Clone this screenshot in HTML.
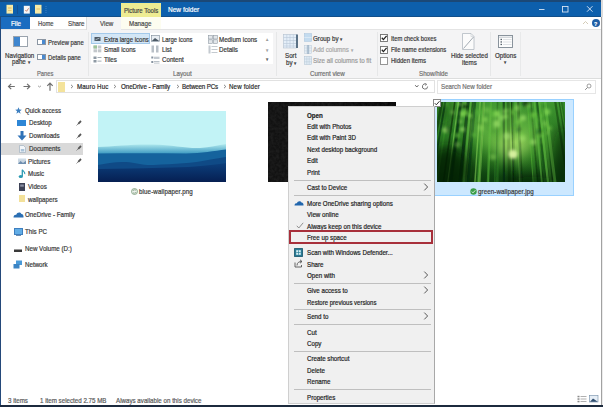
<!DOCTYPE html>
<html><head><meta charset="utf-8">
<style>
*{margin:0;padding:0;box-sizing:border-box}
html,body{width:603px;height:407px;overflow:hidden;background:#fff}
body{position:relative;font-family:"Liberation Sans",sans-serif;color:#222}
.a{position:absolute}
.t{position:absolute;font-size:7px;line-height:8px;white-space:nowrap;color:#383838;-webkit-text-stroke:0.2px currentColor;transform:translateY(0.6px) scaleX(0.885);transform-origin:0 50%}
</style></head><body>

<!-- title bar -->
<div class="a" style="left:0;top:0;width:603px;height:17px;background:#0d5fac"></div>
<div class="a" style="left:0;top:0;width:603px;height:1.5px;background:#1b4877"></div>
<div class="a" style="left:0;top:16px;width:603px;height:1px;background:#124f8a"></div>
<!-- quick access toolbar icons -->
<svg class="a" style="left:5px;top:4px" width="45" height="11">
<rect x="1.5" y="0.8" width="6.5" height="8.8" fill="#f7eaa6"/><line x1="3" y1="4" x2="6.5" y2="4" stroke="#d9a441" stroke-width="0.7"/><line x1="3" y1="6.5" x2="6.5" y2="6.5" stroke="#d9b05a" stroke-width="0.6"/>
<line x1="12.5" y1="1" x2="12.5" y2="10" stroke="#154d8e" stroke-width="0.8"/>
<rect x="18.8" y="1.8" width="6" height="7.8" fill="#f6f6f6"/><polyline points="20.3,6 21.6,7.3 23.6,4.3" fill="none" stroke="#b4553a" stroke-width="0.7"/>
<rect x="30" y="0.8" width="6.5" height="8.8" fill="#f7eaa6"/><line x1="31.5" y1="5" x2="35" y2="5" stroke="#d9a441" stroke-width="0.6"/>
<line x1="41" y1="2" x2="41" y2="9" stroke="#5f97d6" stroke-width="0.6" stroke-dasharray="1 1"/>
</svg>
<!-- Picture tools -->
<div class="a" style="left:121px;top:3px;width:40px;height:14px;background:#eeec92"></div>
<div class="t" style="left:124px;top:5.6px;color:#444;transform:translateY(0.6px) scaleX(0.858)">Picture Tools</div>
<div class="t" style="left:167.5px;top:4.6px;color:#fff;font-size:7.4px">New folder</div>
<!-- window controls -->
<svg class="a" style="left:536px;top:3px" width="60" height="12">
<line x1="3" y1="6.5" x2="8.5" y2="6.5" stroke="#d6e3f3" stroke-width="0.9"/>
<rect x="26.5" y="3.5" width="5.5" height="5.5" fill="none" stroke="#d6e3f3" stroke-width="0.9"/>
<line x1="51" y1="3.2" x2="56.5" y2="8.7" stroke="#dfe9f6" stroke-width="0.9"/><line x1="56.5" y1="3.2" x2="51" y2="8.7" stroke="#dfe9f6" stroke-width="0.9"/>
</svg>



<!-- tab row -->
<div class="a" style="left:0;top:17px;width:603px;height:12px;background:#fff"></div>
<div class="a" style="left:0;top:17px;width:30px;height:12px;background:#1a6cc0"></div>
<div class="t" style="left:11px;top:19px;color:#fff">File</div>
<div class="t" style="left:38px;top:19.2px;color:#4a4a4a;transform:translateY(0.6px) scaleX(0.832)">Home</div>
<div class="t" style="left:67.5px;top:19.2px;color:#4a4a4a">Share</div>

<div class="a" style="left:121px;top:17px;width:40px;height:12px;background:#fdfdf0"></div>
<div class="t" style="left:129px;top:19.2px;color:#4a4a4a">Manage</div>
<div class="a" style="left:591.5px;top:19px;width:8px;height:8px;border-radius:50%;background:#1f5fa6"></div><div class="t" style="left:594px;top:19px;font-size:6px;color:#fff;font-weight:bold">?</div><svg class="a" style="left:582px;top:20px" width="7" height="5"><polyline points="1,4 3.5,1.5 6,4" fill="none" stroke="#cfc6b0" stroke-width="0.9"/></svg>

<!-- ribbon body -->
<div class="a" style="left:0;top:29px;width:603px;height:49.5px;background:#f4f4f5;border-top:1px solid #e4e4e4;border-bottom:1px solid #dcdddd"></div>
<div class="a" style="left:86px;top:17px;width:35px;height:13px;background:#f4f4f5;border-left:1px solid #dcdcdc"></div>
<div class="t" style="left:100px;top:19.2px;color:#4a4a4a">View</div>


<!-- Panes group -->
<div class="a" style="left:13px;top:36px;width:15px;height:11px;border:1px solid #9aa3ad;background:#fff"></div>
<div class="a" style="left:14px;top:37px;width:6px;height:9px;background:#3f86cf"></div>
<div class="t" style="left:5px;top:51.3px">Navigation</div>
<div class="t" style="left:12px;top:57.3px">pane <span style="font-size:5px">&#9662;</span></div>
<div class="a" style="left:37px;top:39px;width:9px;height:6px;border:1px solid #8b96a3;background:#fff"></div>
<div class="a" style="left:42px;top:40px;width:3px;height:4px;background:#4a8ad0"></div>
<div class="t" style="left:48px;top:38px;transform:translateY(0.6px) scaleX(0.841)">Preview pane</div>
<div class="a" style="left:37px;top:54px;width:9px;height:6px;border:1px solid #8b96a3;background:#fff"></div>
<div class="a" style="left:42px;top:55px;width:3px;height:4px;background:#4a8ad0"></div>
<div class="t" style="left:48px;top:53px;transform:translateY(0.6px) scaleX(0.841)">Details pane</div>
<div class="t" style="left:37px;top:68.5px;color:#707070;transform:translateY(0.6px) scaleX(0.823)">Panes</div>
<div class="a" style="left:88px;top:32px;width:1px;height:44px;background:#e6e7e8"></div>

<!-- Layout group -->
<div class="a" style="left:91px;top:33px;width:182px;height:31px;background:#fff"></div>
<div class="a" style="left:91px;top:33px;width:59px;height:10.5px;background:#d3e6f6;border:1px solid #a3c9ea"></div>
<svg class="a" style="left:94px;top:36px" width="7" height="6"><rect x="0.5" y="1" width="6" height="4" fill="#4d5a66"/><line x1="1.5" y1="3.8" x2="5.5" y2="2" stroke="#c9d5de" stroke-width="0.7"/></svg>
<div class="t" style="left:104px;top:34.5px;transform:translateY(0.6px) scaleX(0.858)">Extra large icons</div>
<svg class="a" style="left:93px;top:45px" width="9" height="8"><g fill="#c3c7cb"><rect x="0.5" y="0.5" width="3.5" height="3"/><rect x="4.8" y="0.5" width="3.5" height="3"/><rect x="0.5" y="4.3" width="3.5" height="3"/><rect x="4.8" y="4.3" width="3.5" height="3"/></g><rect x="0.5" y="0.5" width="3.5" height="3" fill="#9dc49a"/></svg>
<div class="t" style="left:104px;top:45px">Small icons</div>
<svg class="a" style="left:93px;top:56px" width="9" height="7"><g fill="#8e99a4"><rect x="0.5" y="0.5" width="3" height="2.5"/><rect x="0.5" y="4" width="3" height="2.5"/><rect x="4.5" y="1.2" width="4" height="0.8"/><rect x="4.5" y="4.7" width="4" height="0.8"/></g></svg>
<div class="t" style="left:104px;top:55px">Tiles</div>
<svg class="a" style="left:151px;top:35px" width="9" height="7"><rect x="0.5" y="0.5" width="8" height="6" fill="#e8edf2" stroke="#7b8794" stroke-width="0.6"/><path d="M0.8 6 L4 3 L8.2 6Z" fill="#4d5a66"/></svg>
<div class="t" style="left:162px;top:34.5px;transform:translateY(0.6px) scaleX(0.845)">Large icons</div>
<svg class="a" style="left:151px;top:45px" width="9" height="8"><g fill="#b9c0c7"><rect x="0.5" y="0.5" width="2.5" height="7"/><rect x="5" y="0.5" width="2.5" height="7"/></g></svg>
<div class="t" style="left:162px;top:45px">List</div>
<svg class="a" style="left:150.5px;top:55.5px" width="9" height="8"><g fill="#8793a0"><rect x="0.3" y="0.5" width="2" height="2"/><rect x="0.3" y="5" width="2" height="2"/></g><g fill="#9aa5b0"><rect x="3" y="0.8" width="5.5" height="0.8"/><rect x="3" y="2.3" width="5.5" height="0.6"/><rect x="3" y="5.3" width="5.5" height="0.8"/><rect x="3" y="6.8" width="5.5" height="0.6"/></g></svg>
<div class="t" style="left:162px;top:55px">Content</div>
<svg class="a" style="left:208px;top:35px" width="10" height="9"><g fill="#e2e6ea" stroke="#8f99a3" stroke-width="0.6"><rect x="0.5" y="0.5" width="4" height="3.5"/><rect x="5.3" y="0.5" width="4" height="3.5"/><rect x="0.5" y="4.8" width="4" height="3.5"/><rect x="5.3" y="4.8" width="4" height="3.5"/></g></svg>
<div class="t" style="left:219px;top:34.5px">Medium icons</div>
<svg class="a" style="left:208px;top:45px" width="10" height="9"><g fill="#c4cad0"><rect x="0.5" y="0.5" width="2" height="8"/><rect x="3.5" y="1" width="6" height="1"/><rect x="3.5" y="4" width="6" height="1"/><rect x="3.5" y="7" width="6" height="1"/></g></svg>
<div class="t" style="left:219px;top:45px">Details</div>
<div class="t" style="left:266px;top:34px;color:#999;font-size:5px">&#9652;</div>
<div class="t" style="left:266px;top:45px;color:#999;font-size:5px">&#9662;</div>
<div class="t" style="left:266px;top:54px;color:#555;font-size:5px">&#9662;</div>
<div class="t" style="left:173px;top:68.5px;color:#707070">Layout</div>
<div class="a" style="left:276px;top:32px;width:1px;height:44px;background:#e6e7e8"></div>

<!-- Current view -->
<svg class="a" style="left:283px;top:34px" width="16" height="15"><rect x="0.5" y="0.5" width="13" height="13.5" fill="#e4eef8" stroke="#b4c2d0" stroke-width="0.6"/><g stroke="#b8c8d8" stroke-width="0.6"><line x1="3.8" y1="0.5" x2="3.8" y2="14"/><line x1="7" y1="0.5" x2="7" y2="14"/><line x1="10.3" y1="0.5" x2="10.3" y2="14"/><line x1="0.5" y1="3.5" x2="13.5" y2="3.5"/><line x1="0.5" y1="6.5" x2="13.5" y2="6.5"/><line x1="0.5" y1="9.5" x2="13.5" y2="9.5"/><line x1="0.5" y1="12" x2="13.5" y2="12"/></g><rect x="13" y="0.5" width="2" height="13.5" fill="#5a7186"/></svg>
<div class="t" style="left:285px;top:51px">Sort</div>
<div class="t" style="left:286px;top:58px">by <span style="font-size:5px">&#9662;</span></div>
<svg class="a" style="left:304px;top:33px" width="8" height="9"><rect x="0.3" y="0.5" width="7.4" height="8" fill="#c3dbef" stroke="#a9c4dc" stroke-width="0.5"/><line x1="0.3" y1="4.5" x2="7.7" y2="4.5" stroke="#e8f1f9" stroke-width="0.6"/></svg>
<div class="t" style="left:313px;top:33.5px">Group by <span style="font-size:5px">&#9662;</span></div>
<svg class="a" style="left:304px;top:45px" width="8" height="9"><rect x="0.3" y="0.5" width="7.4" height="8" fill="#e6eef6" stroke="#b9c8d6" stroke-width="0.5"/><g stroke="#c0cedb" stroke-width="0.5"><line x1="2.8" y1="0.5" x2="2.8" y2="8.5"/><line x1="5.2" y1="0.5" x2="5.2" y2="8.5"/><line x1="0.3" y1="3" x2="7.7" y2="3"/><line x1="0.3" y1="5.8" x2="7.7" y2="5.8"/></g><rect x="3.3" y="0" width="1.5" height="9" fill="#9fb4c8"/></svg>
<div class="t" style="left:313px;top:45px;color:#a7a7a7">Add columns <span style="font-size:5px">&#9662;</span></div>
<svg class="a" style="left:304px;top:56px" width="8" height="9"><rect x="0.3" y="0.5" width="7.4" height="8" fill="#e1ebf5" stroke="#b0c1d2" stroke-width="0.5"/><g stroke="#b9c9d8" stroke-width="0.5"><line x1="2.8" y1="0.5" x2="2.8" y2="8.5"/><line x1="5.2" y1="0.5" x2="5.2" y2="8.5"/><line x1="0.3" y1="3" x2="7.7" y2="3"/><line x1="0.3" y1="5.8" x2="7.7" y2="5.8"/></g></svg>
<div class="t" style="left:313px;top:56px;color:#9a9a9a">Size all columns to fit</div>
<div class="t" style="left:310px;top:68.5px;color:#707070">Current view</div>
<div class="a" style="left:377px;top:32px;width:1px;height:44px;background:#e6e7e8"></div>

<!-- Show/hide -->
<svg class="a" style="left:379.5px;top:34px" width="8" height="8"><rect x="0.5" y="0.5" width="7" height="7" fill="#fff" stroke="#6f6f6f" stroke-width="0.9"/><polyline points="1.8,3.8 3.4,5.6 6.6,1.8" fill="none" stroke="#222" stroke-width="1.3"/></svg>
<div class="t" style="left:391px;top:34px;transform:translateY(0.6px) scaleX(0.832)">Item check boxes</div>
<svg class="a" style="left:379.5px;top:45.5px" width="8" height="8"><rect x="0.5" y="0.5" width="7" height="7" fill="#fff" stroke="#6f6f6f" stroke-width="0.9"/><polyline points="1.8,3.8 3.4,5.6 6.6,1.8" fill="none" stroke="#222" stroke-width="1.3"/></svg>
<div class="t" style="left:391px;top:45px;transform:translateY(0.6px) scaleX(0.836)">File name extensions</div>
<svg class="a" style="left:379.5px;top:56.5px" width="8" height="8"><rect x="0.5" y="0.5" width="7" height="7" fill="#fff" stroke="#8a8a8a" stroke-width="0.9"/></svg>
<div class="t" style="left:391px;top:56px;transform:translateY(0.6px) scaleX(0.858)">Hidden items</div>
<div class="t" style="left:419px;top:68.5px;color:#707070">Show/hide</div>
<svg class="a" style="left:462px;top:33px" width="13" height="17"><path d="M0.5 0.5 H9 L12 3.5 V16.5 H0.5 Z" fill="#fbfbfb" stroke="#b3bac1" stroke-width="0.8"/><path d="M9 0.5 V3.5 H12" fill="none" stroke="#c8cdd2" stroke-width="0.6"/><line x1="1.5" y1="15.5" x2="11.5" y2="4" stroke="#9aa3ab" stroke-width="0.9"/></svg>
<div class="t" style="left:451px;top:51px;transform:translateY(0.6px) scaleX(0.867)">Hide selected</div>
<div class="t" style="left:462px;top:58px">items</div>
<div class="a" style="left:490px;top:32px;width:1px;height:44px;background:#e6e7e8"></div>
<svg class="a" style="left:498px;top:35px" width="15" height="13"><rect x="0.5" y="0.5" width="14" height="12" fill="#fdfdfd" stroke="#7d8892" stroke-width="0.9"/><line x1="0.5" y1="2.2" x2="14.5" y2="2.2" stroke="#9aa4ad" stroke-width="0.6"/><g fill="#56616b"><rect x="2.5" y="3.8" width="1.5" height="1.3"/><rect x="2.5" y="6.3" width="1.5" height="1.3"/><rect x="2.5" y="8.8" width="1.5" height="1.3"/></g><g stroke="#c0c6cc" stroke-width="0.5"><line x1="5" y1="4.5" x2="13.5" y2="4.5"/><line x1="5" y1="7" x2="13.5" y2="7"/><line x1="5" y1="9.5" x2="13.5" y2="9.5"/></g></svg>
<div class="t" style="left:495px;top:51px">Options</div>
<div class="t" style="left:504px;top:57px;font-size:5px">&#9662;</div>
<div class="a" style="left:520px;top:32px;width:1px;height:44px;background:#e8e9ea"></div>

<!-- address row -->
<div class="a" style="left:56px;top:80px;width:379px;height:13px;border:1px solid #e1e1e1;background:#fff"></div>
<div class="a" style="left:437px;top:79.5px;width:158.5px;height:14px;border:1px solid #e6e6e6;background:#fff"></div>
<div class="t" style="left:441px;top:81.6px;color:#707070">Search New folder</div>


<!-- nav arrows -->
<svg class="a" style="left:6px;top:81px" width="50" height="11">
<g fill="none" stroke="#6f6f6f" stroke-width="1.2">
<path d="M2.5 5.5 H8.8 M5.2 2.8 L2.5 5.5 L5.2 8.2"/>
<path d="M17.5 5.5 H23.8 M21.1 2.8 L23.8 5.5 L21.1 8.2"/>
<path d="M44 9.8 V2.2 M41.3 4.9 L44 2.2 L46.7 4.9"/>
</g>
<path d="M32 4.8 L33.5 6 L35 4.8" fill="none" stroke="#888" stroke-width="0.8"/>
</svg>
<div class="a" style="left:57.5px;top:81.5px;width:7px;height:10px;background:#f4e39b"></div>
<svg class="a" style="left:70px;top:84px" width="4" height="5"><polyline points="1,0.8 2.8,2.5 1,4.2" fill="none" stroke="#666" stroke-width="0.8"/></svg>
<div class="t" style="left:76.5px;top:82.3px;letter-spacing:0.15px;color:#2a2a2a">Mauro Huc</div>
<svg class="a" style="left:112.5px;top:84px" width="4" height="5"><polyline points="1,0.8 2.8,2.5 1,4.2" fill="none" stroke="#666" stroke-width="0.8"/></svg>
<div class="t" style="left:121px;top:82.3px;letter-spacing:-0.05px;color:#2a2a2a">OneDrive - Family</div>
<svg class="a" style="left:175.5px;top:84px" width="4" height="5"><polyline points="1,0.8 2.8,2.5 1,4.2" fill="none" stroke="#666" stroke-width="0.8"/></svg>
<div class="t" style="left:182px;top:82.3px;letter-spacing:-0.15px;color:#2a2a2a">Between PCs</div>
<svg class="a" style="left:223px;top:84px" width="4" height="5"><polyline points="1,0.8 2.8,2.5 1,4.2" fill="none" stroke="#666" stroke-width="0.8"/></svg>
<div class="t" style="left:228.5px;top:82.3px;letter-spacing:0.15px;color:#2a2a2a">New folder</div>
<svg class="a" style="left:414px;top:83px" width="16" height="7"><polyline points="1.2,2.2 2.8,4 4.4,2.2" fill="none" stroke="#555" stroke-width="0.9"/><path d="M13.6 3.5 A2.6 2.6 0 1 1 12.2 1.2" fill="none" stroke="#666" stroke-width="0.9"/><polyline points="11.3,0.2 12.6,1.3 11.5,2.6" fill="none" stroke="#666" stroke-width="0.8"/></svg>

<svg class="a" style="left:584px;top:82px" width="9" height="9"><circle cx="5" cy="4" r="2" fill="none" stroke="#888" stroke-width="0.8"/><line x1="3.5" y1="5.5" x2="1.2" y2="7.8" stroke="#888" stroke-width="1"/></svg>

<!-- nav pane -->
<div class="a" style="left:1px;top:142.5px;width:81.5px;height:12px;background:#d9d9d9"></div>
<svg class="a" style="left:15px;top:107px" width="7" height="7"><polygon points="3.5,0.3 4.4,2.6 6.8,2.7 4.9,4.2 5.6,6.7 3.5,5.3 1.4,6.7 2.1,4.2 0.2,2.7 2.6,2.6" fill="#3d7fc0"/></svg>
<div class="t" style="left:25px;top:106.4px;transform:translateY(0.6px) scaleX(0.863)">Quick access</div>
<div class="a" style="left:17px;top:120px;width:9px;height:6px;background:#2d86d6"></div>
<div class="t" style="left:29px;top:118.4px">Desktop</div>
<svg class="a" style="left:17px;top:131px" width="10" height="10"><rect x="3.5" y="0" width="3" height="5" fill="#2f72b8"/><polygon points="0.5,4.5 9.5,4.5 5,9.5" fill="#2f72b8"/></svg>
<div class="t" style="left:29px;top:131.4px">Downloads</div>
<svg class="a" style="left:18.5px;top:144.5px" width="7" height="8"><path d="M0.5 0.5 H4.5 L6.5 2.5 V7.5 H0.5Z" fill="#f3f6f9" stroke="#9fb0c0" stroke-width="0.7"/><rect x="1.8" y="4" width="3.5" height="2.5" fill="#a9c2d8"/></svg>
<div class="t" style="left:29px;top:143.9px">Documents</div>
<svg class="a" style="left:17.7px;top:157.5px" width="8.2" height="6"><rect x="0" y="0" width="8.2" height="6" fill="#c9d6e2"/><path d="M0 6 L2.5 3 L5 5 L8.2 2.5 V6Z" fill="#6f8fb0"/><rect x="0" y="0" width="8.2" height="1.2" fill="#e5edf4"/></svg>
<div class="t" style="left:28px;top:156.9px">Pictures</div>
<svg class="a" style="left:17.5px;top:169px" width="8" height="9.5"><path d="M4.3 0.8 V7.3" stroke="#2a9ab3" stroke-width="1.3"/><ellipse cx="2.8" cy="7.6" rx="2.1" ry="1.5" fill="#2a9ab3"/><path d="M4.3 0.8 C5.5 2.5 7.2 3 6.8 5.2" fill="none" stroke="#2a9ab3" stroke-width="1.1"/></svg>
<div class="t" style="left:28px;top:168.9px">Music</div>
<svg class="a" style="left:18.5px;top:182.5px" width="6" height="8"><rect x="0" y="0" width="6" height="8" fill="#3d4256"/><rect x="1.2" y="1.5" width="3.6" height="2.2" fill="#8a8fa3"/></svg>
<div class="t" style="left:28px;top:181.9px">Videos</div>
<div class="a" style="left:18.5px;top:194.8px;width:6.5px;height:7.5px;background:#f3e19a"></div>
<div class="t" style="left:28px;top:194.9px">wallpapers</div>
<svg class="a" style="left:76px;top:120px" width="6" height="6"><line x1="0.5" y1="5.5" x2="2.5" y2="3.5" stroke="#777" stroke-width="0.8"/><line x1="2.2" y1="3.8" x2="5" y2="1" stroke="#555" stroke-width="1.8"/></svg>
<svg class="a" style="left:76px;top:133px" width="6" height="6"><line x1="0.5" y1="5.5" x2="2.5" y2="3.5" stroke="#777" stroke-width="0.8"/><line x1="2.2" y1="3.8" x2="5" y2="1" stroke="#555" stroke-width="1.8"/></svg>
<svg class="a" style="left:76px;top:145px" width="6" height="6"><line x1="0.5" y1="5.5" x2="2.5" y2="3.5" stroke="#777" stroke-width="0.8"/><line x1="2.2" y1="3.8" x2="5" y2="1" stroke="#555" stroke-width="1.8"/></svg>
<svg class="a" style="left:76px;top:158px" width="6" height="6"><line x1="0.5" y1="5.5" x2="2.5" y2="3.5" stroke="#777" stroke-width="0.8"/><line x1="2.2" y1="3.8" x2="5" y2="1" stroke="#555" stroke-width="1.8"/></svg>
<svg class="a" style="left:13px;top:211px" width="11" height="7"><path d="M0.5 6.5 C0.5 4.2 2 3.6 3.3 3.8 C3.9 1.2 7.3 0.6 8.4 3 C10 3 10.8 4.8 10.5 6.5 Z" fill="#2b6fb3"/></svg>
<div class="t" style="left:25px;top:210.4px">OneDrive - Family</div>
<div class="a" style="left:14px;top:228px;width:9px;height:7px;background:#62ade6;border:1px solid #3f7fbf"></div><div class="a" style="left:16px;top:235px;width:5px;height:1px;background:#6c8fb3"></div>
<div class="t" style="left:25px;top:227.4px">This PC</div>
<div class="a" style="left:14px;top:249px;width:8px;height:3px;background:#3a3a3a;border-top:1px solid #999"></div>
<div class="t" style="left:25px;top:244.4px">New Volume (D:)</div>
<svg class="a" style="left:13px;top:260px" width="10" height="9"><rect x="3" y="0.5" width="6" height="4.5" fill="#4a9ad8"/><rect x="0.5" y="4" width="6" height="4.5" fill="#3b84c4"/></svg>
<div class="t" style="left:25px;top:260.4px">Network</div>

<!-- thumbnails -->
<svg class="a" style="left:98px;top:111px" width="128" height="71" viewBox="0 0 128 71">
<defs><linearGradient id="l1" gradientUnits="userSpaceOnUse" x1="0" y1="33" x2="0" y2="43"><stop offset="0" stop-color="#b0e9ee"/><stop offset="1" stop-color="#3a98c0"/></linearGradient>
<linearGradient id="l4" x1="0" y1="0" x2="0" y2="1"><stop offset="0" stop-color="#0c3f7c"/><stop offset="1" stop-color="#061f52"/></linearGradient></defs>
<rect width="128" height="71" fill="#c2f3f6"/>
<path d="M0 36 C15 35.5 35 33 55 33.5 C75 34 88 37.5 102 37 C112 36.5 120 34 128 33 L128 71 L0 71Z" fill="url(#l1)"/>
<path d="M0 42.5 C30 42 60 42 88 42.5 C104 42 116 40 128 38.5 L128 71 L0 71Z" fill="#15639d"/>
<path d="M0 54 C8 52.5 18 50.5 28 51 C38 51.5 44 54.5 56 54 C76 53 96 52 110 49 C118 47.5 124 46.5 128 46 L128 71 L0 71Z" fill="#0f4a86"/>
<path d="M0 58 C30 57.5 60 57 90 56 C108 55 120 53 128 52 L128 71 L0 71Z" fill="url(#l4)"/>
</svg>
<svg class="a" style="left:131px;top:187.5px" width="7" height="7"><circle cx="3.5" cy="3.5" r="3" fill="#eef4ee" stroke="#7a9a7a" stroke-width="0.8"/><path d="M1.8 3.2 A1.8 1.8 0 0 1 5 2.5 M5.2 3.8 A1.8 1.8 0 0 1 2 4.5" fill="none" stroke="#5a7a5a" stroke-width="0.6"/></svg>
<div class="t" style="left:139px;top:186.5px;letter-spacing:0.12px">blue-wallpaper.png</div>

<svg class="a" style="left:268px;top:102px" width="128" height="80" viewBox="0 0 128 80">
<defs><filter id="nz" x="0" y="0" width="100%" height="100%"><feTurbulence type="fractalNoise" baseFrequency="0.35" numOctaves="2" seed="4"/><feColorMatrix type="matrix" values="0 0 0 0 0.2  0 0 0 0 0.2  0 0 0 0 0.2  0 0 0 0.9 -0.25"/></filter>
<linearGradient id="dg" x1="0" y1="0" x2="1" y2="0"><stop offset="0" stop-color="#111"/><stop offset="0.5" stop-color="#121212"/><stop offset="1" stop-color="#070707"/></linearGradient></defs>
<rect width="128" height="80" fill="url(#dg)"/>
<rect width="128" height="80" filter="url(#nz)" opacity="0.25"/>
</svg>

<div class="a" style="left:433px;top:99px;width:141px;height:97px;background:#cce8ff;border:1px solid #99d1ff"></div>
<svg class="a" style="left:437px;top:102px" width="128" height="80" viewBox="0 0 128 80">
<defs><linearGradient id="g0" x1="0" y1="0" x2="0" y2="1"><stop offset="0" stop-color="#3f9630"/><stop offset="0.5" stop-color="#26751f"/><stop offset="1" stop-color="#0b3a0d"/></linearGradient>
<radialGradient id="g1" cx="0.6" cy="0.5" r="0.45"><stop offset="0" stop-color="#b6e66a" stop-opacity="0.8"/><stop offset="0.5" stop-color="#5cb23a" stop-opacity="0.4"/><stop offset="1" stop-color="#2a7a22" stop-opacity="0"/></radialGradient>
<filter id="bl" x="-50%" y="-50%" width="200%" height="200%"><feGaussianBlur stdDeviation="1.8"/></filter>
<filter id="bl3" x="-50%" y="-50%" width="200%" height="200%"><feGaussianBlur stdDeviation="6"/></filter>
<filter id="bl2"><feGaussianBlur stdDeviation="0.6"/></filter></defs>
<rect width="128" height="80" fill="url(#g0)"/>
<rect width="128" height="80" fill="url(#g1)"/>
<g filter="url(#bl2)">
<line x1="83.4" y1="82" x2="79.9" y2="-2" stroke="#7ccc50" stroke-width="2.6" stroke-opacity="0.31"/>
<line x1="58.6" y1="82" x2="60.1" y2="-2" stroke="#3a9a2a" stroke-width="3.1" stroke-opacity="0.35"/>
<line x1="59.1" y1="82" x2="60.5" y2="-2" stroke="#093010" stroke-width="1.5" stroke-opacity="0.40"/>
<line x1="100.5" y1="82" x2="93.6" y2="-2" stroke="#05230a" stroke-width="1.9" stroke-opacity="0.36"/>
<line x1="110.9" y1="82" x2="102.0" y2="-2" stroke="#3a9a2a" stroke-width="1.3" stroke-opacity="0.35"/>
<line x1="138.6" y1="82" x2="124.1" y2="-2" stroke="#3a9a2a" stroke-width="1.0" stroke-opacity="0.65"/>
<line x1="30.7" y1="82" x2="37.8" y2="-2" stroke="#093010" stroke-width="3.1" stroke-opacity="0.55"/>
<line x1="13.7" y1="82" x2="24.2" y2="-2" stroke="#05230a" stroke-width="3.1" stroke-opacity="0.42"/>
<line x1="42.1" y1="82" x2="46.9" y2="-2" stroke="#021806" stroke-width="1.4" stroke-opacity="0.43"/>
<line x1="114.1" y1="82" x2="104.5" y2="-2" stroke="#5cb83e" stroke-width="2.3" stroke-opacity="0.33"/>
<line x1="41.1" y1="82" x2="46.1" y2="-2" stroke="#3a9a2a" stroke-width="1.7" stroke-opacity="0.49"/>
<line x1="96.3" y1="82" x2="90.3" y2="-2" stroke="#4fae34" stroke-width="1.1" stroke-opacity="0.68"/>
<line x1="41.5" y1="82" x2="46.4" y2="-2" stroke="#05230a" stroke-width="1.9" stroke-opacity="0.45"/>
<line x1="76.4" y1="82" x2="74.3" y2="-2" stroke="#021806" stroke-width="1.0" stroke-opacity="0.55"/>
<line x1="135.8" y1="82" x2="121.8" y2="-2" stroke="#05230a" stroke-width="1.3" stroke-opacity="0.44"/>
<line x1="41.1" y1="82" x2="46.0" y2="-2" stroke="#4fae34" stroke-width="2.2" stroke-opacity="0.54"/>
<line x1="108.4" y1="82" x2="99.9" y2="-2" stroke="#05230a" stroke-width="1.8" stroke-opacity="0.68"/>
<line x1="-0.6" y1="82" x2="12.7" y2="-2" stroke="#3a9a2a" stroke-width="1.7" stroke-opacity="0.44"/>
<line x1="131.0" y1="82" x2="118.0" y2="-2" stroke="#05230a" stroke-width="2.2" stroke-opacity="0.42"/>
<line x1="111.2" y1="82" x2="102.2" y2="-2" stroke="#5cb83e" stroke-width="2.4" stroke-opacity="0.70"/>
<line x1="10.5" y1="82" x2="21.6" y2="-2" stroke="#7ccc50" stroke-width="1.1" stroke-opacity="0.67"/>
<line x1="-10.0" y1="82" x2="5.2" y2="-2" stroke="#05230a" stroke-width="2.6" stroke-opacity="0.48"/>
<line x1="51.6" y1="82" x2="54.5" y2="-2" stroke="#4fae34" stroke-width="1.1" stroke-opacity="0.62"/>
<line x1="37.8" y1="82" x2="43.4" y2="-2" stroke="#7ccc50" stroke-width="1.5" stroke-opacity="0.68"/>
<line x1="84.6" y1="82" x2="80.9" y2="-2" stroke="#05230a" stroke-width="2.7" stroke-opacity="0.45"/>
<line x1="-5.7" y1="82" x2="8.6" y2="-2" stroke="#093010" stroke-width="1.9" stroke-opacity="0.64"/>
<line x1="139.2" y1="82" x2="124.6" y2="-2" stroke="#093010" stroke-width="2.0" stroke-opacity="0.43"/>
<line x1="28.3" y1="82" x2="35.8" y2="-2" stroke="#4fae34" stroke-width="2.0" stroke-opacity="0.45"/>
<line x1="141.2" y1="82" x2="126.1" y2="-2" stroke="#2d8424" stroke-width="3.1" stroke-opacity="0.65"/>
<line x1="13.5" y1="82" x2="24.0" y2="-2" stroke="#093010" stroke-width="2.1" stroke-opacity="0.65"/>
<line x1="42.1" y1="82" x2="46.9" y2="-2" stroke="#7ccc50" stroke-width="2.7" stroke-opacity="0.57"/>
<line x1="105.0" y1="82" x2="97.2" y2="-2" stroke="#5cb83e" stroke-width="1.8" stroke-opacity="0.63"/>
<line x1="26.8" y1="82" x2="34.7" y2="-2" stroke="#5cb83e" stroke-width="3.2" stroke-opacity="0.56"/>
<line x1="76.7" y1="82" x2="74.6" y2="-2" stroke="#05230a" stroke-width="1.0" stroke-opacity="0.43"/>
<line x1="28.2" y1="82" x2="35.8" y2="-2" stroke="#093010" stroke-width="1.6" stroke-opacity="0.62"/>
<line x1="40.0" y1="82" x2="45.2" y2="-2" stroke="#2d8424" stroke-width="2.4" stroke-opacity="0.44"/>
<line x1="118.2" y1="82" x2="107.7" y2="-2" stroke="#5cb83e" stroke-width="2.9" stroke-opacity="0.68"/>
<line x1="66.9" y1="82" x2="66.7" y2="-2" stroke="#05230a" stroke-width="2.2" stroke-opacity="0.67"/>
<line x1="60.4" y1="82" x2="61.5" y2="-2" stroke="#2d8424" stroke-width="2.5" stroke-opacity="0.37"/>
<line x1="108.3" y1="82" x2="99.8" y2="-2" stroke="#2d8424" stroke-width="2.3" stroke-opacity="0.42"/>
<line x1="72.4" y1="82" x2="71.1" y2="-2" stroke="#021806" stroke-width="2.9" stroke-opacity="0.38"/>
<line x1="77.7" y1="82" x2="75.3" y2="-2" stroke="#093010" stroke-width="2.4" stroke-opacity="0.37"/>
<line x1="98.5" y1="82" x2="92.0" y2="-2" stroke="#3a9a2a" stroke-width="3.2" stroke-opacity="0.32"/>
<line x1="6.1" y1="82" x2="18.1" y2="-2" stroke="#021806" stroke-width="1.7" stroke-opacity="0.52"/>
<line x1="50.6" y1="82" x2="53.7" y2="-2" stroke="#4fae34" stroke-width="1.8" stroke-opacity="0.54"/>
<line x1="22.6" y1="82" x2="31.3" y2="-2" stroke="#05230a" stroke-width="3.0" stroke-opacity="0.68"/>
</g>
<g filter="url(#bl)">
<circle cx="103.9" cy="33.8" r="2.5" fill="#6cc840" fill-opacity="0.65"/>
<circle cx="41.8" cy="10.0" r="3.4" fill="#4aa832" fill-opacity="0.83"/>
<circle cx="99.7" cy="17.9" r="2.7" fill="#4aa832" fill-opacity="0.61"/>
<circle cx="25.6" cy="12.6" r="1.7" fill="#8ee05a" fill-opacity="0.67"/>
<circle cx="47.3" cy="17.2" r="1.4" fill="#2a7d22" fill-opacity="0.81"/>
<circle cx="68.4" cy="14.5" r="2.5" fill="#a8ea70" fill-opacity="0.59"/>
<circle cx="33.3" cy="13.8" r="2.1" fill="#8ee05a" fill-opacity="0.67"/>
<circle cx="37.1" cy="32.9" r="2.2" fill="#4aa832" fill-opacity="0.83"/>
<circle cx="42.4" cy="21.7" r="1.3" fill="#0a3510" fill-opacity="0.68"/>
<circle cx="57.7" cy="12.2" r="3.1" fill="#6cc840" fill-opacity="0.62"/>
<circle cx="70.8" cy="8.0" r="1.3" fill="#a8ea70" fill-opacity="0.52"/>
<circle cx="25.3" cy="27.3" r="2.6" fill="#a8ea70" fill-opacity="0.63"/>
<circle cx="104.7" cy="39.6" r="1.2" fill="#8ee05a" fill-opacity="0.54"/>
<circle cx="67.8" cy="9.3" r="2.4" fill="#a8ea70" fill-opacity="0.56"/>
<circle cx="84.4" cy="18.7" r="1.2" fill="#2a7d22" fill-opacity="0.61"/>
<circle cx="110.7" cy="31.0" r="1.2" fill="#a8ea70" fill-opacity="0.67"/>
<circle cx="85.2" cy="36.1" r="3.2" fill="#a8ea70" fill-opacity="0.61"/>
<circle cx="84.4" cy="32.4" r="2.3" fill="#6cc840" fill-opacity="0.54"/>
<circle cx="8.4" cy="28.0" r="2.7" fill="#a8ea70" fill-opacity="0.81"/>
<circle cx="24.0" cy="16.8" r="2.3" fill="#4aa832" fill-opacity="0.64"/>
<circle cx="55.7" cy="11.2" r="2.9" fill="#4aa832" fill-opacity="0.77"/>
<circle cx="96.7" cy="13.2" r="2.9" fill="#6cc840" fill-opacity="0.85"/>
<circle cx="86.5" cy="2.1" r="1.7" fill="#0a3510" fill-opacity="0.77"/>
<circle cx="20.4" cy="42.8" r="2.8" fill="#a8ea70" fill-opacity="0.47"/>
<circle cx="76.4" cy="9.9" r="2.6" fill="#6cc840" fill-opacity="0.65"/>
<circle cx="81.9" cy="20.3" r="2.5" fill="#6cc840" fill-opacity="0.73"/>
<circle cx="106.4" cy="4.2" r="1.9" fill="#2a7d22" fill-opacity="0.62"/>
<circle cx="47.6" cy="29.9" r="1.5" fill="#4aa832" fill-opacity="0.47"/>
<circle cx="78.7" cy="23.0" r="2.5" fill="#2a7d22" fill-opacity="0.50"/>
<circle cx="15.1" cy="10.2" r="1.9" fill="#8ee05a" fill-opacity="0.76"/>
<circle cx="104.7" cy="13.8" r="1.5" fill="#6cc840" fill-opacity="0.69"/>
<circle cx="17.5" cy="14.6" r="1.5" fill="#2a7d22" fill-opacity="0.60"/>
<circle cx="51.7" cy="21.7" r="1.4" fill="#2a7d22" fill-opacity="0.41"/>
<circle cx="89.2" cy="1.3" r="3.4" fill="#0a3510" fill-opacity="0.76"/>
<circle cx="92.0" cy="3.8" r="2.3" fill="#8ee05a" fill-opacity="0.46"/>
<circle cx="78.0" cy="9.2" r="2.0" fill="#2a7d22" fill-opacity="0.72"/>
<circle cx="97.2" cy="15.1" r="2.0" fill="#4aa832" fill-opacity="0.76"/>
<circle cx="56.5" cy="29.0" r="2.6" fill="#2a7d22" fill-opacity="0.50"/>
<circle cx="28.2" cy="1.3" r="1.6" fill="#8ee05a" fill-opacity="0.42"/>
<circle cx="107.6" cy="19.8" r="1.2" fill="#a8ea70" fill-opacity="0.54"/>
<circle cx="112.7" cy="26.3" r="2.3" fill="#8ee05a" fill-opacity="0.47"/>
<circle cx="25.8" cy="11.4" r="3.2" fill="#8ee05a" fill-opacity="0.65"/>
<circle cx="20.3" cy="33.4" r="2.7" fill="#6cc840" fill-opacity="0.62"/>
<circle cx="11.6" cy="27.6" r="3.4" fill="#0a3510" fill-opacity="0.41"/>
<circle cx="59.1" cy="20.1" r="3.0" fill="#4aa832" fill-opacity="0.53"/>
<circle cx="83.5" cy="17.4" r="1.7" fill="#6cc840" fill-opacity="0.66"/>
<circle cx="81.5" cy="28.1" r="2.8" fill="#0a3510" fill-opacity="0.54"/>
<circle cx="60.4" cy="11.4" r="2.9" fill="#8ee05a" fill-opacity="0.75"/>
<circle cx="27.7" cy="4.3" r="2.6" fill="#0a3510" fill-opacity="0.84"/>
<circle cx="8.7" cy="2.5" r="2.1" fill="#6cc840" fill-opacity="0.41"/>
<circle cx="101.6" cy="29.7" r="3.4" fill="#0a3510" fill-opacity="0.43"/>
<circle cx="108.7" cy="22.7" r="1.3" fill="#8ee05a" fill-opacity="0.69"/>
<circle cx="63.7" cy="16.1" r="3.1" fill="#a8ea70" fill-opacity="0.54"/>
<circle cx="13.8" cy="1.8" r="1.6" fill="#2a7d22" fill-opacity="0.69"/>
<circle cx="29.1" cy="10.7" r="3.0" fill="#6cc840" fill-opacity="0.64"/>
<circle cx="111.2" cy="26.2" r="1.7" fill="#6cc840" fill-opacity="0.60"/>
<circle cx="48.1" cy="17.5" r="2.4" fill="#8ee05a" fill-opacity="0.73"/>
<circle cx="110.3" cy="9.9" r="3.1" fill="#8ee05a" fill-opacity="0.65"/>
<circle cx="23.5" cy="20.1" r="1.8" fill="#a8ea70" fill-opacity="0.54"/>
<circle cx="22.5" cy="2.2" r="1.4" fill="#a8ea70" fill-opacity="0.84"/>
<circle cx="76" cy="52" r="4.5" fill="#f0fcb8" fill-opacity="0.95"/>
<circle cx="60" cy="22" r="3.5" fill="#b0ec78" fill-opacity="0.7"/>
<circle cx="86" cy="16" r="3" fill="#a8e870" fill-opacity="0.65"/>
<circle cx="44" cy="26" r="3" fill="#8fd85a" fill-opacity="0.55"/>
<circle cx="96" cy="40" r="3" fill="#a6e872" fill-opacity="0.6"/>
<circle cx="56" cy="55" r="3" fill="#8ad45a" fill-opacity="0.5"/>
<circle cx="70" cy="34" r="3.5" fill="#c0f090" fill-opacity="0.6"/>
<circle cx="80" cy="6" r="3" fill="#8ed85e" fill-opacity="0.6"/>
<circle cx="50" cy="8" r="3" fill="#7ccc4e" fill-opacity="0.5"/>
<circle cx="108" cy="22" r="2.5" fill="#7ccc4e" fill-opacity="0.45"/>
</g>
<g filter="url(#bl3)"><ellipse cx="66" cy="26" rx="36" ry="20" fill="#86d452" fill-opacity="0.35"/><ellipse cx="74" cy="48" rx="14" ry="12" fill="#b6e878" fill-opacity="0.35"/></g>
<g filter="url(#bl3)"><ellipse cx="10" cy="68" rx="22" ry="24" fill="#021a05" fill-opacity="0.75"/><ellipse cx="126" cy="55" rx="10" ry="30" fill="#021a05" fill-opacity="0.55"/><ellipse cx="96" cy="82" rx="24" ry="7" fill="#021a05" fill-opacity="0.5"/><ellipse cx="6" cy="10" rx="8" ry="12" fill="#021a05" fill-opacity="0.4"/></g>
</svg>
<div class="a" style="left:433px;top:99px;width:8px;height:8px;border:1px solid #8a8a8a;background:#fff"></div><svg class="a" style="left:433px;top:99px" width="8" height="8"><polyline points="1.8,4.2 3.3,5.8 6.5,2.2" fill="none" stroke="#333" stroke-width="1"/></svg>
<svg class="a" style="left:470px;top:187.5px" width="7" height="7"><circle cx="3.5" cy="3.5" r="3.2" fill="#3a9e48"/><polyline points="1.8,3.6 3,4.8 5.3,2.3" fill="none" stroke="#fff" stroke-width="0.8"/></svg>
<div class="t" style="left:478px;top:186.5px;letter-spacing:0.1px">green-wallpaper.jpg</div>

<!-- context menu -->
<div class="a" style="left:288px;top:106px;width:147px;height:297.5px;background:#f0f0f0;border:1px solid #cfcfcf;border-right:1.5px solid #a8a8a8"></div>
<div class="t" style="left:306.5px;top:110.5px;color:#222;font-weight:bold;">Open</div>
<div class="t" style="left:306.5px;top:121.7px;color:#222;">Edit with Photos</div>
<div class="t" style="left:306.5px;top:133.0px;color:#222;">Edit with Paint 3D</div>
<div class="t" style="left:306.5px;top:144.5px;color:#222;">Next desktop background</div>
<div class="t" style="left:306.5px;top:156.0px;color:#222;">Edit</div>
<div class="t" style="left:306.5px;top:167.5px;color:#222;">Print</div>
<div class="a" style="left:294px;top:180px;width:137px;height:1px;background:#bfbfbf"></div>
<div class="t" style="left:306.5px;top:183.3px;color:#222;">Cast to Device</div>
<svg class="a" style="left:423px;top:183.3px" width="6" height="8"><polyline points="1.3,0.6 4.6,4 1.3,7.4" fill="none" stroke="#585858" stroke-width="1"/></svg>
<div class="a" style="left:294px;top:195px;width:137px;height:1px;background:#bfbfbf"></div>
<div class="t" style="left:306.5px;top:198.5px;color:#222;">More OneDrive sharing options</div>
<svg class="a" style="left:294px;top:199.5px" width="10" height="6"><path d="M0.5 5.5 C0.5 3.5 2 3 3 3.2 C3.5 1 6.5 0.5 7.5 2.5 C9 2.5 9.8 4 9.5 5.5 Z" fill="#2166ad"/></svg>
<div class="t" style="left:306.5px;top:210.0px;color:#222;">View online</div>
<div class="t" style="left:306.5px;top:221.5px;color:#222;">Always keep on this device</div>
<svg class="a" style="left:295.5px;top:221.5px" width="8" height="7"><polyline points="0.8,3.8 2.8,6 7.2,0.8" fill="none" stroke="#777" stroke-width="0.8"/></svg>
<div class="a" style="left:289px;top:230px;width:143.5px;height:13.5px;border:2px solid #a8303b"></div>
<div class="t" style="left:306.5px;top:232.5px;color:#222;">Free up space</div>
<div class="t" style="left:306.5px;top:247.5px;color:#222;">Scan with Windows Defender...</div>
<svg class="a" style="left:294px;top:247.5px" width="9" height="9"><rect x="0.6" y="0.6" width="7.8" height="7.8" fill="#2d7f9a" stroke="#1f5d72" stroke-width="1"/><rect x="2.2" y="2.2" width="4.6" height="4.6" fill="#d8f0f5"/><path d="M4.5 2.2 V6.8 M2.2 4.5 H6.8" stroke="#2d7f9a" stroke-width="0.7"/></svg>
<div class="t" style="left:306.5px;top:259.5px;color:#222;">Share</div>
<svg class="a" style="left:294px;top:259px" width="9" height="9"><path d="M1 3.5 V8 H7.5 V6" fill="none" stroke="#555" stroke-width="0.9"/><path d="M3 6.5 C3 3.5 5 2.5 8 2.5 M6 0.8 L8 2.5 L6 4.2" fill="none" stroke="#555" stroke-width="0.9"/></svg>
<div class="t" style="left:306.5px;top:271.0px;color:#222;">Open with</div>
<svg class="a" style="left:423px;top:271.0px" width="6" height="8"><polyline points="1.3,0.6 4.6,4 1.3,7.4" fill="none" stroke="#585858" stroke-width="1"/></svg>
<div class="a" style="left:294px;top:283px;width:137px;height:1px;background:#bfbfbf"></div>
<div class="t" style="left:306.5px;top:285.9px;color:#222;">Give access to</div>
<svg class="a" style="left:423px;top:285.9px" width="6" height="8"><polyline points="1.3,0.6 4.6,4 1.3,7.4" fill="none" stroke="#585858" stroke-width="1"/></svg>
<div class="t" style="left:306.5px;top:297.8px;color:#222;;transform:translateY(0.6px) scaleX(0.858)">Restore previous versions</div>
<div class="a" style="left:294px;top:309px;width:137px;height:1px;background:#bfbfbf"></div>
<div class="t" style="left:306.5px;top:312.3px;color:#222;">Send to</div>
<svg class="a" style="left:423px;top:312.3px" width="6" height="8"><polyline points="1.3,0.6 4.6,4 1.3,7.4" fill="none" stroke="#585858" stroke-width="1"/></svg>
<div class="a" style="left:294px;top:324px;width:137px;height:1px;background:#bfbfbf"></div>
<div class="t" style="left:306.5px;top:327.5px;color:#222;">Cut</div>
<div class="t" style="left:306.5px;top:339.2px;color:#222;">Copy</div>
<div class="a" style="left:294px;top:351px;width:137px;height:1px;background:#bfbfbf"></div>
<div class="t" style="left:306.5px;top:354.0px;color:#222;">Create shortcut</div>
<div class="t" style="left:306.5px;top:365.7px;color:#222;">Delete</div>
<div class="t" style="left:306.5px;top:377.1px;color:#222;">Rename</div>
<div class="a" style="left:294px;top:389px;width:137px;height:1px;background:#bfbfbf"></div>
<div class="t" style="left:306.5px;top:392.5px;color:#222;">Properties</div>


<!-- status bar -->
<div class="t" style="left:8px;top:396px;color:#5a5a5a">3 items</div>
<div class="t" style="left:40px;top:396px;color:#5a5a5a">1 item selected  2.75 MB</div>
<div class="t" style="left:116px;top:396px;color:#5a5a5a">Always available on this device</div>
<svg class="a" style="left:577px;top:395px" width="22" height="8"><g fill="#8a8a8a"><rect x="0.5" y="0.8" width="2" height="1.5"/><rect x="0.5" y="3.3" width="2" height="1.5"/><rect x="0.5" y="5.8" width="2" height="1.5"/></g><g fill="#b0b0b0"><rect x="3.5" y="1" width="6" height="1"/><rect x="3.5" y="3.5" width="6" height="1"/><rect x="3.5" y="6" width="6" height="1"/></g><rect x="12.5" y="0.5" width="8.5" height="6.5" fill="#e6eef6" stroke="#6f8aa6" stroke-width="0.6"/><path d="M13 6.8 L16 3.5 L20.8 6.8Z" fill="#2e4d6e"/></svg>

<!-- window borders -->
<div class="a" style="left:0;top:17px;width:1px;height:390px;background:#24497a"></div>
<div class="a" style="left:600.5px;top:17px;width:1.8px;height:390px;background:#a2a2a2"></div>
<div class="a" style="left:601px;top:0;width:2px;height:17px;background:#dcdcdc"></div>
<div class="a" style="left:602.3px;top:17px;width:1px;height:390px;background:#ececec"></div>
<div class="a" style="left:0;top:405px;width:603px;height:2px;background:#1c2a3d"></div>

</body></html>
